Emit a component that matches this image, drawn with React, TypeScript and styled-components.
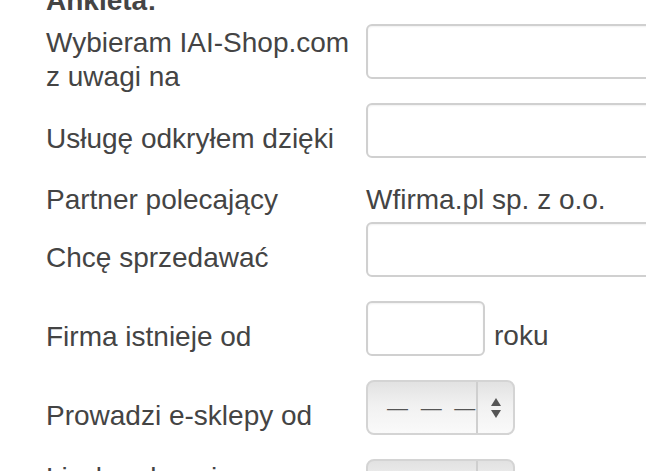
import React, { FC } from "react";
import styled, { createGlobalStyle } from "styled-components";

const GlobalStyle = createGlobalStyle`
  html, body {
    margin: 0;
    padding: 0;
    background: #fff;
    overflow: hidden;
  }
  body {
    font-family: "Liberation Sans", Arial, Helvetica, sans-serif;
    color: #444;
  }
`;

const Root = styled.div`
  width: 900px;
  padding-left: 46px;
  font-size: 28px;
  line-height: 34px;
`;

const Title = styled.h2`
  margin: -16px 0 0;
  font-size: 28px;
  line-height: 34px;
  font-weight: bold;
  color: #444;
`;

const Row = styled.div<{ $tight?: boolean }>`
  display: grid;
  grid-template-columns: 320px 1fr;
  align-items: center;
  padding: ${({ $tight }) => ($tight ? "6px 0 2px" : "6px 0")};
`;

const Label = styled.div`
  margin: -2px 0 -3px;
  padding: 3px 10px 0 0;
  line-height: 34px;
`;

const Field = styled.div`
  display: flex;
  align-items: flex-end;
  gap: 9px;
  padding-bottom: 12px;
`;

const StaticValue = styled.div`
  margin: -2px 0 -3px;
  padding-top: 3px;
  line-height: 34px;
`;

const TextInput = styled.input<{ $width: number }>`
  box-sizing: border-box;
  width: ${({ $width }) => $width}px;
  height: 55px;
  margin: 0;
  border: 2px solid #d0d0d0;
  border-radius: 6px;
  background: #fff;
  box-shadow: inset 0 1px 2px rgba(0, 0, 0, 0.06);
  font: inherit;
  outline: none;
`;

const Suffix = styled.span`
  margin-bottom: 4px;
  line-height: 32px;
`;

const Select = styled.div`
  box-sizing: border-box;
  display: flex;
  width: 149px;
  height: 55px;
  border: 2px solid #d4d4d4;
  border-radius: 8px;
  background: linear-gradient(#e2e2e2, #f1f1f1 45%, #fafafa);
  overflow: hidden;
`;

const SelectValue = styled.div`
  flex: 1;
  display: flex;
  align-items: center;
  padding: 0 7px 0 19px;
  overflow: hidden;
  white-space: nowrap;
  font-size: 21px;
  letter-spacing: 3.4px;
  color: #555;
`;

const SelectArrows = styled.div`
  width: 35px;
  display: flex;
  align-items: center;
  justify-content: center;
  border-left: 2px solid #cfcfcf;
`;

const Arrows: FC = () => (
  <svg width="12" height="22" viewBox="0 0 12 22">
    <path d="M6 1 L11 9 L1 9 Z" fill="#555" />
    <path d="M1 13 L11 13 L6 21 Z" fill="#555" />
  </svg>
);

const YearSelect: FC = () => (
  <Select>
    <SelectValue>— — —</SelectValue>
    <SelectArrows>
      <Arrows />
    </SelectArrows>
  </Select>
);

const App: FC = () => {
  return (
    <>
      <GlobalStyle />
      <Root>
        <Title>Ankieta:</Title>

        <Row>
          <Label>Wybieram IAI-Shop.com z uwagi na</Label>
          <Field>
            <TextInput $width={400} />
          </Field>
        </Row>

        <Row>
          <Label>Usługę odkryłem dzięki</Label>
          <Field>
            <TextInput $width={400} />
          </Field>
        </Row>

        <Row $tight>
          <Label>Partner polecający</Label>
          <StaticValue>Wfirma.pl sp. z o.o.</StaticValue>
        </Row>

        <Row>
          <Label>Chcę sprzedawać</Label>
          <Field>
            <TextInput $width={400} />
          </Field>
        </Row>

        <Row>
          <Label>Firma istnieje od</Label>
          <Field>
            <TextInput $width={119} />
            <Suffix>roku</Suffix>
          </Field>
        </Row>

        <Row>
          <Label>Prowadzi e-sklepy od</Label>
          <Field>
            <YearSelect />
          </Field>
        </Row>

        <Row>
          <Label>Liczba obecnie prowadzonych sklepów</Label>
          <Field>
            <YearSelect />
          </Field>
        </Row>
      </Root>
    </>
  );
};

export default App;
